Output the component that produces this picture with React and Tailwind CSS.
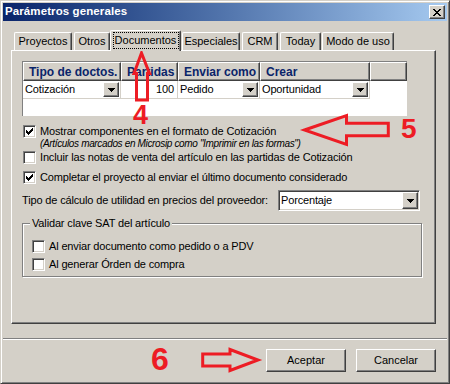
import React from "react";

const CHECK = "M6 0h1v1h-1z M5 1h2v1h-2z M0 2h1v1h-1z M4 2h3v1h-3z M0 3h2v1h-2z M3 3h3v1h-3z M0 4h5v1h-5z M1 5h3v1h-3z M2 6h1v1h-1z";
const TRI = "M0 0h7v1h-7z M1 1h5v1h-5z M2 2h3v1h-3z M3 3h1v1h-1z";
const XP = "M0 0h2v1h-2z M6 0h2v1h-2z M1 1h2v1h-2z M5 1h2v1h-2z M2 2h4v1h-4z M3 3h2v1h-2z M2 4h4v1h-4z M1 5h2v1h-2z M5 5h2v1h-2z M0 6h2v1h-2z M6 6h2v1h-2z";

const raised =
  "border border-t-white border-l-white border-r-[#404040] border-b-[#404040] shadow-[inset_-1px_-1px_#808080] bg-[#d4d0c8]";
const sunken =
  "border border-t-[#808080] border-l-[#808080] border-r-white border-b-white shadow-[inset_1px_1px_#404040,inset_-1px_-1px_#d4d0c8] bg-white";

function Check({ checked }) {
  return (
    <div className={`w-[13px] h-[13px] shrink-0 ${sunken} relative`}>
      {checked && (
        <svg width="7" height="7" viewBox="0 0 7 7" className="absolute left-[2px] top-[2px]" shapeRendering="crispEdges">
          <path d={CHECK} fill="#000" />
        </svg>
      )}
    </div>
  );
}

function DropBtn({ w = 16, h = 15 }) {
  return (
    <div className={`${raised} shrink-0 flex items-center justify-center`} style={{ width: w, height: h }}>
      <svg width="7" height="4" viewBox="0 0 7 4" shapeRendering="crispEdges">
        <path d={TRI} fill="#000" />
      </svg>
    </div>
  );
}

const tabs = [
  { t: "Proyectos", w: 58, ml: 0 },
  { t: "Otros", w: 36, ml: 2 },
  { t: "Documentos", w: 71, ml: 0, sel: true },
  { t: "Especiales", w: 58, ml: 1 },
  { t: "CRM", w: 36, ml: 2 },
  { t: "Today", w: 41, ml: 2 },
  { t: "Modo de uso", w: 72, ml: 1 },
];

function HeadCell({ w, children }) {
  return (
    <div
      className="h-full shrink-0 bg-[#d4d0c8] border border-t-white border-l-white border-r-[#404040] border-b-[#404040] shadow-[inset_-1px_-1px_#808080] pl-[5px] flex items-center font-bold text-[12px] tracking-normal text-[#0a246a] whitespace-nowrap overflow-hidden"
      style={{ width: w }}
    >
      {children}
    </div>
  );
}

export default function App() {
  return (
    <div className="relative w-[450px] h-[384px] bg-[#d4d0c8] border border-t-[#d4d0c8] border-l-[#d4d0c8] border-r-[#404040] border-b-[#404040] shadow-[inset_1px_1px_#fff,inset_-1px_-1px_#808080] p-[2px] flex flex-col font-['Liberation_Sans',Arial,sans-serif] text-[11px] tracking-[-0.15px] text-black leading-none">
      {/* Title bar */}
      <div className="h-[18px] shrink-0 bg-linear-to-r from-[#0a246a] to-[#a6caf0] flex items-center justify-between pl-[2px] pr-[2px]">
        <span className="text-white font-bold text-[11.5px] tracking-[0.1px]">Parámetros generales</span>
        <div className={`${raised} w-[16px] h-[14px] flex items-center justify-center`}>
          <svg width="8" height="7" viewBox="0 0 8 7" shapeRendering="crispEdges">
            <path d={XP} fill="#000" />
          </svg>
        </div>
      </div>

      {/* Tabs */}
      <div className="mt-[9px] h-[20px] flex items-end pl-[11px] shrink-0 tracking-normal">
        {tabs.map((tb) =>
          tb.sel ? (
            <div
              key={tb.t}
              className="relative z-10 h-[21px] -mb-[1px] bg-[#d4d0c8] border-t border-l border-white border-r border-r-[#404040] shadow-[inset_-1px_0_#808080] rounded-t-[2px] flex items-start justify-center pt-[1px]"
              style={{ width: tb.w, marginLeft: tb.ml }}
            >
              <span className="border border-dotted border-black h-[17px] w-[66px] flex items-center justify-center">{tb.t}</span>
            </div>
          ) : (
            <div
              key={tb.t}
              className="h-[18px] bg-[#d4d0c8] border-t border-l border-white border-r border-r-[#404040] shadow-[inset_-1px_0_#808080] rounded-t-[2px] flex items-center justify-center"
              style={{ width: tb.w, marginLeft: tb.ml }}
            >
              {tb.t}
            </div>
          )
        )}
      </div>

      {/* Panel */}
      <div className="ml-[8px] w-[425px] h-[274px] shrink-0 border border-t-white border-l-white border-r-[#404040] border-b-[#404040] shadow-[inset_-1px_-1px_#808080] flex flex-col">
        {/* Grid */}
        <div className="ml-[10px] mt-[10px] w-[385px] h-[55px] bg-white border-t border-l border-[#808080] flex flex-col">
          <div className="h-[19px] flex">
            <HeadCell w={98}>Tipo de doctos.</HeadCell>
            <HeadCell w={57}>Partidas</HeadCell>
            <HeadCell w={82}>Enviar como</HeadCell>
            <HeadCell w={110}>Crear</HeadCell>
            <HeadCell w={37}></HeadCell>
          </div>
          <div className="h-[18px] flex">
            <div className="w-[98px] h-full border-r border-b border-[#d4d0c8] flex items-center justify-between pl-[2px] pr-[1px]">
              <span>Cotización</span>
              <DropBtn />
            </div>
            <div className="w-[57px] h-full border-r border-b border-[#d4d0c8] flex items-center justify-end pr-[3px]">100</div>
            <div className="w-[82px] h-full border-r border-b border-[#d4d0c8] flex items-center justify-between pl-[2px] pr-[1px]">
              <span>Pedido</span>
              <DropBtn />
            </div>
            <div className="w-[110px] h-full border-r border-b border-[#d4d0c8] flex items-center justify-between pl-[2px] pr-[1px]">
              <span>Oportunidad</span>
              <DropBtn />
            </div>
          </div>
        </div>

        {/* Checkboxes */}
        <div className="mt-[9px] ml-[11px] h-[13px] flex items-center gap-[4px]">
          <Check checked />
          <span>Mostrar componentes en el formato de Cotización</span>
        </div>
        <div className="ml-[28px] h-[11px] flex items-center italic text-[10px] tracking-[-0.35px]">
          (Artículos marcados en Microsip como "Imprimir en las formas")
        </div>
        <div className="mt-[2px] ml-[11px] h-[13px] flex items-center gap-[4px]">
          <Check />
          <span>Incluir las notas de venta del artículo en las partidas de Cotización</span>
        </div>
        <div className="mt-[7px] ml-[11px] h-[13px] flex items-center gap-[4px]">
          <Check checked />
          <span>Completar el proyecto al enviar el último documento considerado</span>
        </div>

        {/* Combo row */}
        <div className="mt-[6px] ml-[10px] h-[21px] flex items-center">
          <span className="w-[256px]">Tipo de cálculo de utilidad en precios del proveedor:</span>
          <div className={`${sunken} w-[142px] h-[21px] flex items-center justify-between pl-[2px] pr-[1px]`}>
            <span>Porcentaje</span>
            <DropBtn w={16} h={17} />
          </div>
        </div>

        {/* Group box */}
        <div className="relative mt-[12px] ml-[10px] w-[400px] h-[54px] border border-[#808080] shadow-[inset_1px_1px_#fff,1px_1px_#fff] flex flex-col">
          <span className="absolute left-[7px] -top-[7px] px-[2px] h-[12px] bg-[#d4d0c8] flex items-center">Validar clave SAT del artículo</span>
          <div className="mt-[16px] ml-[9px] h-[13px] flex items-center gap-[4px]">
            <Check />
            <span>Al enviar documento como pedido o a PDV</span>
          </div>
          <div className="mt-[5px] ml-[9px] h-[13px] flex items-center gap-[4px]">
            <Check />
            <span>Al generar Órden de compra</span>
          </div>
        </div>
      </div>

      {/* Separator */}
      <div className="mt-[14px] h-[2px] shrink-0 border-t border-t-[#808080] border-b border-b-white" />

      {/* Buttons */}
      <div className="mt-[9px] flex justify-end gap-[10px] pr-[11px] tracking-normal">
        <div className={`${raised} w-[80px] h-[23px] flex items-center justify-center`}>Aceptar</div>
        <div className={`${raised} w-[80px] h-[23px] flex items-center justify-center`}>Cancelar</div>
      </div>

      {/* Annotations */}
      <svg className="absolute -left-px -top-px pointer-events-none" width="450" height="384" viewBox="0 0 450 384">
        <g fill="none" stroke="#ed1c24" strokeWidth="3" strokeLinejoin="miter">
          <polygon points="141.5,53 149.5,73.5 147.5,73.5 147.5,100 136.5,100 136.5,73.5 134,73.5" />
          <polygon points="304.5,130 346.5,115.5 346.5,123.3 388.3,123.3 388.3,135.7 346.5,135.7 346.5,144.5" />
          <polygon points="202.7,354 230,354 230,349.5 258,360 230,370.5 230,366 202.7,366" />
        </g>
        <g fill="#ed1c24" fontFamily="Liberation Sans, Arial, sans-serif" fontWeight="bold">
          <text x="133" y="124" fontSize="27">4</text>
          <text x="401" y="138" fontSize="28">5</text>
          <text x="151" y="370" fontSize="32">6</text>
        </g>
      </svg>
    </div>
  );
}
